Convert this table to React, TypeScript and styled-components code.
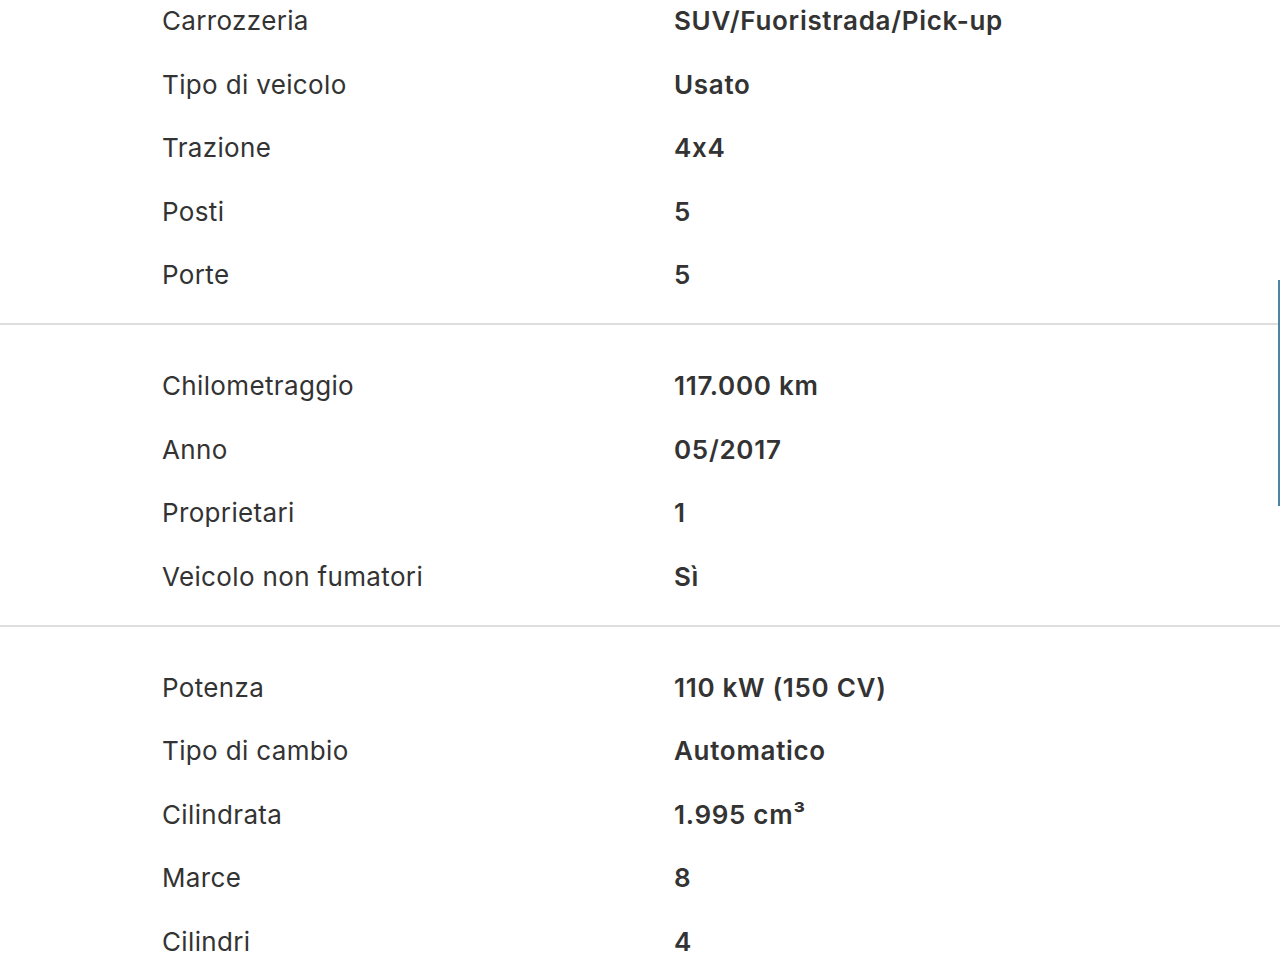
import React from 'react';
import styled, {createGlobalStyle} from 'styled-components';

type Spec = {label: string; value: React.ReactNode};

const sections: Spec[][] = [
  [
    {label: 'Carrozzeria', value: 'SUV/Fuoristrada/Pick-up'},
    {label: 'Tipo di veicolo', value: 'Usato'},
    {label: 'Trazione', value: '4x4'},
    {label: 'Posti', value: '5'},
    {label: 'Porte', value: '5'},
  ],
  [
    {label: 'Chilometraggio', value: '117.000 km'},
    {label: 'Anno', value: '05/2017'},
    {label: 'Proprietari', value: '1'},
    {label: 'Veicolo non fumatori', value: 'Sì'},
  ],
  [
    {label: 'Potenza', value: '110 kW (150 CV)'},
    {label: 'Tipo di cambio', value: 'Automatico'},
    {label: 'Cilindrata', value: '1.995 cm³'},
    {label: 'Marce', value: '8'},
    {label: 'Cilindri', value: '4'},
  ],
];

export default function App() {
  return (
    <>
      <GlobalStyle />
      <Page>
        {sections.map((rows, i) => (
          <Section key={i} first={i === 0}>
            {rows.map((row) => (
              <Row key={row.label}>
                <Label>{row.label}</Label>
                <Value>{row.value}</Value>
              </Row>
            ))}
          </Section>
        ))}
        <ScrollThumb />
      </Page>
    </>
  );
}

const GlobalStyle = createGlobalStyle`
  html, body {
    margin: 0;
    padding: 0;
    background: #fff;
    overflow: hidden;
  }
  body {
    font-family: Inter, "Noto Sans", "Liberation Sans", sans-serif;
    color: #333;
    -webkit-font-smoothing: antialiased;
  }
`;

const Page = styled.div`
  position: relative;
  width: 1280px;
  height: 960px;
  overflow: hidden;
`;

const Section = styled.section<{first: boolean}>`
  padding: ${(p) => (p.first ? '0' : '29px')} 0 16.5px;
  margin-top: ${(p) => (p.first ? '-11px' : '0')};
  border-bottom: 2px solid #dedede;
`;

const Row = styled.div`
  display: grid;
  grid-template-columns: 512px 1fr;
  align-items: center;
  height: 63.5px;
  padding-left: 162px;
  font-size: 26px;
`;

const Label = styled.span`
  font-weight: 400;
  letter-spacing: 0.35px;
  color: #333;
`;

const Value = styled.span`
  font-weight: 600;
  letter-spacing: 0.7px;
  color: #333;
`;

const ScrollThumb = styled.div`
  position: absolute;
  right: 0;
  top: 280px;
  width: 2px;
  height: 226px;
  background: #4f83a6;
`;
